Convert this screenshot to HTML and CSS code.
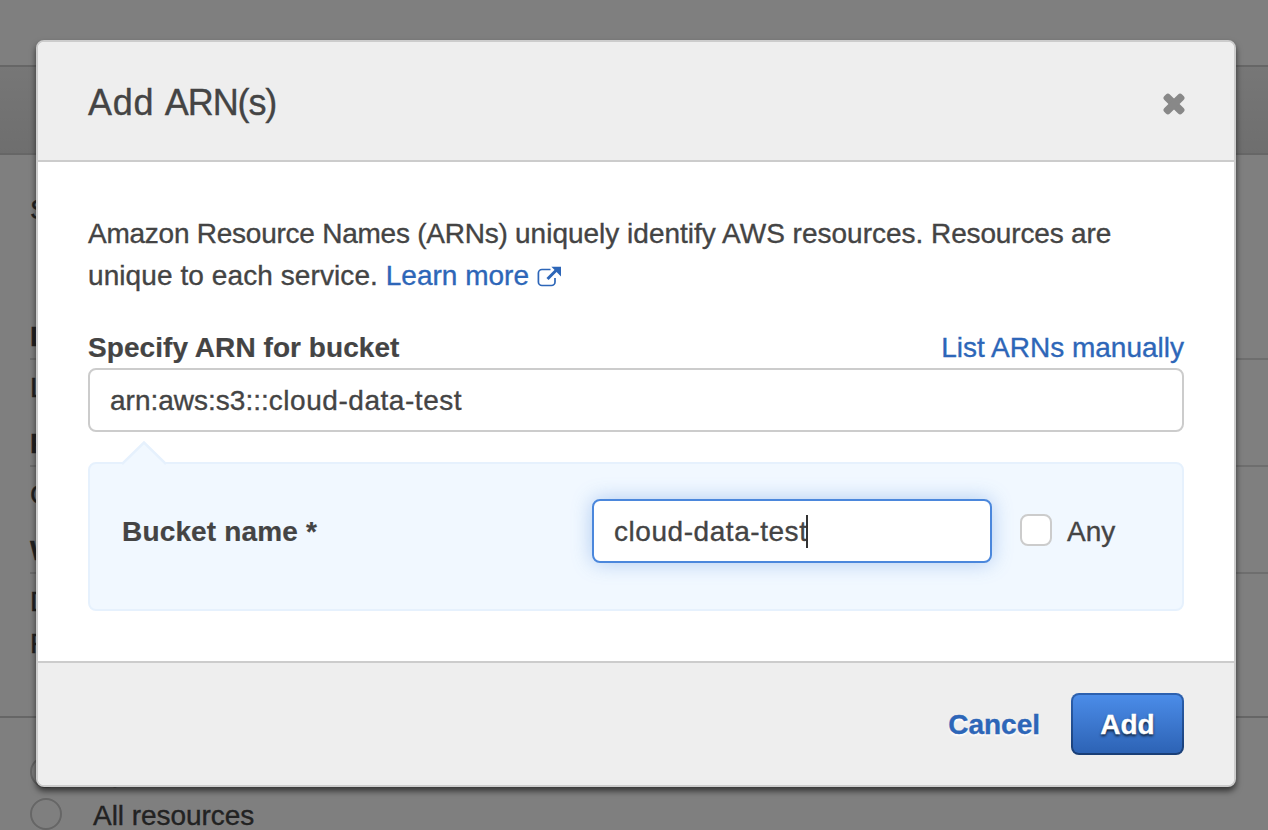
FILE: index.html
```html
<!DOCTYPE html>
<html lang="en">
<head>
<meta charset="utf-8">
<title>Add ARN(s)</title>
<link rel="stylesheet" href="styles.css">
</head>
<body>
<div class="page">
  <div class="toolbar"></div>
  <div class="section service">S3</div>
  <div class="section actions">
    <div class="group-title">List</div>
    <div class="group-items">List</div>
    <div class="group-title">Read</div>
    <div class="group-items">Get</div>
    <div class="group-title">Write</div>
    <div class="group-items">Delete<br>Put</div>
  </div>
  <div class="resources">
    <div class="choice"><span class="radio"></span><span>Specific</span></div>
    <div class="choice"><span class="radio"></span><span class="choice-text">All resources</span></div>
  </div>
</div>
<div class="backdrop">
  <div class="modal">
    <div class="modal-header">
      <h1 class="title"><span class="title-verb">Add </span>ARN(s)</h1>
      <svg class="close" width="22" height="22" viewBox="0 0 22 22" fill="#888"><rect x="-1.500" y="7.100" width="25" height="7.800" rx="2.800" transform="rotate(45 11 11)"/><rect x="-1.500" y="7.100" width="25" height="7.800" rx="2.800" transform="rotate(-45 11 11)"/></svg>
    </div>
    <div class="modal-body">
      <p class="intro"><span class="intro-name">Amazon Resource Names (ARNs) </span>uniquely identify AWS resources. <span class="intro-end">Resources are</span><br><span class="intro-second">unique to each service. </span><a class="link">Learn more</a><svg class="external" width="24" height="22" viewBox="0 0 24 22"><path d="M13.5 3.500H5a3.600 3.600 0 0 0-3.600 3.600v8.800A3.600 3.600 0 0 0 5 19.500h9.400a3.600 3.600 0 0 0 3.600-3.600V12" fill="none" stroke="#2d66b8" stroke-width="1.700"/><path d="M10.500 13L19.500 4" stroke="#2d66b8" stroke-width="3"/><path d="M14.400 .8H24V10.400Z" fill="#2d66b8"/></svg></p>
      <div class="label-row">
        <span class="label">Specify ARN for bucket</span>
        <a class="link">List ARNs manually</a>
      </div>
      <div class="input arn"><span>arn:aws:s3:::<span class="name-value">cloud-data-test</span></span></div>
      <div class="panel">
        <svg class="pointer" width="44" height="24" viewBox="0 0 44 24"><path d="M0 24V22.500L22 1L44 22.500V24Z" fill="#f1f8ff"/><path d="M0 23L22 1.500L44 23" fill="none" stroke="#e6f1fd" stroke-width="2.500"/></svg>
        <span class="label name-label">Bucket name *</span>
        <div class="input focused"><span class="name-value">cloud-data-test</span><span class="caret"></span></div>
        <span class="checkbox"></span>
        <span class="any">Any</span>
      </div>
    </div>
    <div class="modal-footer">
      <a class="cancel">Cancel</a>
      <div class="add"><span>Add</span></div>
    </div>
  </div>
</div>
</body>
</html>
```
FILE: styles.css
```css
* { box-sizing: border-box; }
body {
  margin: 0;
  width: 1268px;
  height: 830px;
  overflow: hidden;
  position: relative;
  background: #fff;
  color: #444;
  font: 28px/42px "Liberation Sans", Arial, sans-serif;
  white-space: nowrap;
  -webkit-text-stroke: .35px;
}
.page { padding-top: 65px; height: 830px; overflow: hidden; }
.toolbar {
  height: 90px;
  border-top: 2px solid #ccc;
  border-bottom: 2px solid #ccc;
  background: linear-gradient(#eee, #ddd);
}
.section { padding-left: 30px; }
.service { height: 158px; padding-top: 34px; }
.actions { height: 405px; padding-top: 3px; border-bottom: 2px solid #ccc; }
.group-title { height: 44px; border-bottom: 2px solid #ddd; font-weight: bold; }
.group-items { padding: 7px 0 14px; }
.resources { padding: 33px 30px 0; }
.choice { display: flex; align-items: center; height: 42px; gap: 31px; line-height: 30px; }
.choice-text { padding-top: 3px; line-height: 28px; letter-spacing: -.05px; }
.radio { width: 32px; height: 32px; border: 2px solid #ccc; border-radius: 50%; }
.backdrop {
  position: absolute;
  inset: 0;
  padding: 40px 32px 0 36px;
  background: rgba(0, 0, 0, .5);
}
.modal {
  height: 747px;
  display: flex;
  flex-direction: column;
  background: #fff;
  border: 2px solid #ccc;
  border-radius: 8px;
  box-shadow: 0 4px 6px rgba(0, 0, 0, .6);
}
.modal-header {
  height: 120px;
  padding: 0 49px 0 50px;
  display: flex;
  align-items: center;
  justify-content: space-between;
  background: #eee;
  border-bottom: 2px solid #ccc;
  border-radius: 6px 6px 0 0;
}
.title { margin: 0; padding-top: 3px; font-size: 36px; font-weight: normal; letter-spacing: -1.1px; }
.title-verb { letter-spacing: .7px; }
.close { display: block; margin-top: 5px; overflow: visible; }
.modal-body { flex: 1; padding: 51px 50px 0; }
.intro { margin: 0 0 30px; height: 84px; }
.intro-name { letter-spacing: -.245px; }
.intro-end { letter-spacing: -.16px; }
.intro-second { letter-spacing: .085px; }
.link { color: #2d66b8; }
.external { margin-left: 8px; vertical-align: -3px; }
.label { font-weight: bold; letter-spacing: .06px; -webkit-text-stroke: .2px; }
.label-row { display: flex; justify-content: space-between; height: 41px; }
.input {
  height: 64px;
  padding: 0 20px;
  display: flex;
  align-items: center;
  background: #fff;
  border: 2px solid #ccc;
  border-radius: 8px;
}
.arn { padding-top: 2px; }
.panel {
  position: relative;
  display: flex;
  align-items: center;
  height: 149px;
  margin-top: 30px;
  padding: 0 32px 11px;
  background: #f1f8ff;
  border: 2px solid #e6f1fd;
  border-radius: 8px;
}
.pointer { position: absolute; left: 32px; top: -23px; }
.name-label { width: 470px; padding-top: 2px; letter-spacing: .16px; }
.any { padding-top: 2px; }
.focused {
  width: 400px;
  padding-top: 1px;
  border-color: #4b87dc;
  box-shadow: 0 0 20px rgba(75, 135, 220, .4);
}
.focused .name-value { padding-top: 1px; }
.name-value { letter-spacing: .55px; }
.caret { width: 2px; height: 33px; margin: 0 0 1px -1px; background: #333; }
.checkbox {
  width: 32px;
  height: 32px;
  margin: 0 15px 2px 28px;
  background: #fff;
  border: 2px solid #ccc;
  border-radius: 8px;
}
.modal-footer {
  height: 124px;
  padding: 0 50px 0;
  display: flex;
  align-items: center;
  justify-content: flex-end;
  gap: 31px;
  background: #eee;
  border-top: 2px solid #ccc;
  border-radius: 0 0 6px 6px;
  font-weight: bold;
}
.cancel { padding-top: 2px; color: #2d66b8; text-shadow: 0 2px 2px #fff; }
.add {
  width: 113px;
  height: 62px;
  padding-top: 2px;
  display: flex;
  align-items: center;
  justify-content: center;
  color: #fff;
  text-shadow: 0 2px 3px rgba(0, 0, 0, .8);
  background: linear-gradient(#4b8ce8, #2d63b5) padding-box, linear-gradient(#2c61b0, #193e76) border-box;
  border: 2px solid transparent;
  border-radius: 8px;
}
```
